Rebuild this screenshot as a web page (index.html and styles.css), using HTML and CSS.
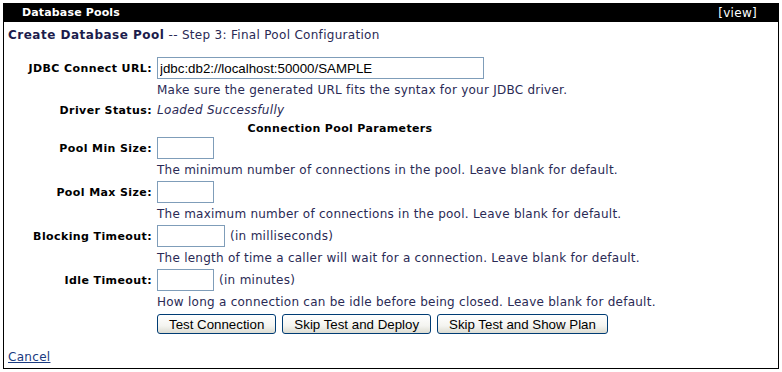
FILE: index.html
```html
<!DOCTYPE html>
<html>
<head>
    <meta name="viewport" content="width=device-width, initial-scale=1.0">
    <title>Database Pools</title>
    <link rel="stylesheet" href="styles.css">
</head>
<body>
    <div class="portlet">
        <div class="portlet-head">
            <span class="portlet-title">Database Pools</span>
            <span class="portlet-mode">[view]</span>
        </div>

        <div class="portlet-body">
            <div class="page-title"><b>Create Database Pool</b> -- Step 3: Final Pool Configuration</div>

            <div class="pool-form">
                <div class="label">JDBC Connect URL:</div>
                <div class="field"><input class="url-input" type="text" value="jdbc:db2://localhost:50000/SAMPLE"></div>

                <div></div>
                <div class="hint">Make sure the generated URL fits the syntax for your JDBC driver.</div>

                <div class="label">Driver Status:</div>
                <div class="status"><i>Loaded Successfully</i></div>

                <div class="section-title">Connection Pool Parameters</div>

                <div class="label">Pool Min Size:</div>
                <div class="field"><input class="size-input" type="text"></div>

                <div></div>
                <div class="hint">The minimum number of connections in the pool. Leave blank for default.</div>

                <div class="label">Pool Max Size:</div>
                <div class="field"><input class="size-input" type="text"></div>

                <div></div>
                <div class="hint">The maximum number of connections in the pool. Leave blank for default.</div>

                <div class="label">Blocking Timeout:</div>
                <div class="field"><input class="time-input" type="text"><span class="unit">(in milliseconds)</span></div>

                <div></div>
                <div class="hint">The length of time a caller will wait for a connection. Leave blank for default.</div>

                <div class="label">Idle Timeout:</div>
                <div class="field"><input class="size-input" type="text"><span class="unit">(in minutes)</span></div>

                <div></div>
                <div class="hint">How long a connection can be idle before being closed. Leave blank for default.</div>

                <div></div>
                <div class="buttons">
                    <button class="btn">Test Connection</button>
                    <button class="btn">Skip Test and Deploy</button>
                    <button class="btn">Skip Test and Show Plan</button>
                </div>
            </div>

            <a class="cancel-link" href="#">Cancel</a>
        </div>
    </div>
</body>
</html>
```

FILE: styles.css
```css
body {
    font-family: "DejaVu Sans", Verdana, sans-serif;
    font-size: 12px;
    letter-spacing: 0.3px;
    margin: 0;
    padding: 3px;
    background: #fff;
    color: #2a2a55;
}

.portlet {
    border: 1px solid #000;
}

.portlet-head {
    background: #000;
    color: #fff;
    height: 18px;
    line-height: 18px;
    padding: 0 21px 0 18px;
    display: flex;
    justify-content: space-between;
}

.portlet-title {
    font-weight: bold;
    font-size: 11px;
    letter-spacing: 0.15px;
}

.portlet-body {
    padding: 6px 4px 4px 4px;
}

.page-title {
    line-height: 14px;
    margin-bottom: 15px;
}

.page-title b {
    color: #1c1c4c;
    letter-spacing: 0.5px;
}

.pool-form {
    display: grid;
    grid-template-columns: 144px 1fr;
    grid-template-rows: 22px 22px 18px 18px repeat(9, 22px);
    column-gap: 5px;
    width: 664px;
    align-items: center;
}

.label {
    text-align: right;
    font-weight: bold;
    font-size: 11px;
    letter-spacing: 0.4px;
    color: #000;
}

.section-title {
    grid-column: 1 / 3;
    text-align: center;
    font-weight: bold;
    font-size: 11px;
    letter-spacing: 0.35px;
    color: #000;
}

.hint {
    letter-spacing: 0.25px;
}

.field {
    display: flex;
    align-items: center;
    gap: 5px;
}

.field input {
    box-sizing: border-box;
    height: 22px;
    border: 1px solid #7f9db9;
    padding: 1px 2px;
    font-family: "Liberation Sans", Arial, sans-serif;
    font-size: 13.3px;
    letter-spacing: 0;
    color: #000;
    margin: 0;
}

.url-input {
    width: 327px;
}

.size-input {
    width: 57px;
}

.time-input {
    width: 68px;
}

.buttons {
    display: flex;
    gap: 6px;
}

.btn {
    height: 20px;
    padding: 0 11px;
    font-family: "Liberation Sans", Arial, sans-serif;
    font-size: 13.3px;
    letter-spacing: 0;
    color: #000;
    border: 1px solid #003c74;
    border-radius: 3px;
    background: linear-gradient(#ffffff 0%, #f4f4f0 60%, #dcdcd2 100%);
    cursor: pointer;
}

.cancel-link {
    display: block;
    width: fit-content;
    margin-top: 15px;
    line-height: 14px;
    color: #1a3a80;
}
```
